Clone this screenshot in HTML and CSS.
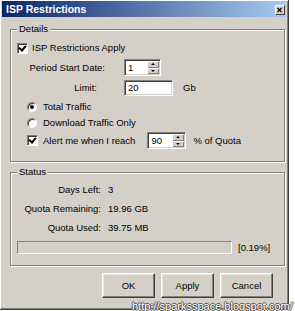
FILE: index.html
```html
<!DOCTYPE html>
<html lang="en">
<head>
    <meta charset="UTF-8">
    <title>ISP Restrictions</title>
    <link rel="stylesheet" href="styles.css">
</head>
<body>
    <div class="page">
        <div class="window">
            <div class="titlebar">
                <span class="title">ISP Restrictions</span>
                <span class="close">
                    <svg width="9" height="10" viewBox="0 0 9 10"><path d="M2.5 3 L6.5 7 M6.5 3 L2.5 7" stroke="#000" stroke-width="1.2"/></svg>
                </span>
            </div>

            <!-- Details -->
            <div class="group group-details">
                <span class="group-title">Details</span>
                <div class="row row-apply"><span class="check is-checked"></span>ISP Restrictions Apply</div>
                <div class="row row-period">
                    <span class="lbl">Period Start Date:</span>
                    <span class="spin spin-date">
                        <span class="spin-text">1</span>
                        <span class="spin-btns"><span class="spin-up"></span><span class="spin-down"></span></span>
                    </span>
                </div>
                <div class="row row-limit">
                    <span class="lbl lbl-limit">Limit:</span>
                    <span class="edit">20</span>
                    <span class="unit">Gb</span>
                </div>
                <div class="row row-radio"><span class="radio is-checked"></span>Total Traffic</div>
                <div class="row row-radio"><span class="radio"></span>Download Traffic Only</div>
                <div class="row row-alert">
                    <span class="check is-checked"></span>Alert me when I reach
                    <span class="spin spin-pct">
                        <span class="spin-text">90</span>
                        <span class="spin-btns"><span class="spin-up"></span><span class="spin-down"></span></span>
                    </span>
                    <span class="unit unit-pct">% of Quota</span>
                </div>
            </div>

            <!-- Status -->
            <div class="group group-status">
                <span class="group-title">Status</span>
                <div class="stat"><span class="stat-lbl">Days Left:</span><span class="stat-val">3</span></div>
                <div class="stat"><span class="stat-lbl">Quota Remaining:</span><span class="stat-val">19.96 GB</span></div>
                <div class="stat"><span class="stat-lbl">Quota Used:</span><span class="stat-val">39.75 MB</span></div>
                <div class="progress-row">
                    <span class="progress"></span>
                    <span class="progress-pct">[0.19%]</span>
                </div>
            </div>

            <div class="buttons">
                <button>OK</button>
                <button>Apply</button>
                <button>Cancel</button>
            </div>
        </div>
        <span class="watermark">http://sparksspace.blogspot.com/</span>
    </div>
</body>
</html>
```

FILE: styles.css
```css
body {
    margin: 0;
    background-color: #fff;
    font-family: "Liberation Sans", Arial, sans-serif;
    font-size: 9.5px;
    color: #000;
}
.page {
    position: relative;
    width: 295px;
    height: 311px;
}
.window {
    display: flex;
    flex-direction: column;
    box-sizing: border-box;
    width: 289px;
    height: 310px;
    background-color: #d4d0c8;
    border-right: 1px solid #404040;
    border-bottom: 1px solid #404040;
    box-shadow: inset 1px 1px 0 #fff, inset -1px -1px 0 #808080;
}
.titlebar {
    display: flex;
    align-items: center;
    height: 16px;
    margin: 1px 2px 0 2px;
    padding-left: 4px;
    background: linear-gradient(to right, #0a246a, #a6caf0);
}
.title {
    color: #fff;
    font-weight: bold;
    font-size: 10.5px;
    line-height: 1;
}
.close {
    display: flex;
    box-sizing: border-box;
    width: 10px;
    height: 10px;
    margin: 1px 1px 0 auto;
    background-color: #d4d0c8;
    border: 1px solid;
    border-color: #fff #404040 #404040 #fff;
}
.close svg {
    display: block;
    margin: -1px 0 0 -1px;
}

/* group boxes */
.group {
    position: relative;
    box-sizing: border-box;
    width: 275px;
    margin-left: 10px;
    border: 1px solid #808080;
    box-shadow: 1px 1px 0 #fff, inset 1px 1px 0 #fff;
}
.group-title {
    position: absolute;
    top: -7px;
    left: 6px;
    padding: 0 2px;
    line-height: 12px;
    background-color: #d4d0c8;
}
.group-details {
    height: 133px;
    margin-top: 12px;
    padding-top: 12px;
}
.group-status {
    height: 94px;
    margin-top: 10px;
    padding-top: 11px;
}
.row {
    display: flex;
    align-items: center;
    line-height: 12px;
}
.row-apply {
    height: 12px;
    padding-left: 6px;
}
.row-period {
    height: 17px;
    margin-top: 5px;
}
.row-limit {
    height: 16px;
    margin-top: 4px;
}
.row-radio {
    height: 12px;
    margin-top: 5px;
    padding-left: 16px;
}
.row-radio + .row-radio {
    margin-top: 4px;
}
.row-alert {
    height: 17px;
    margin-top: 3px;
    padding-left: 16px;
}
.lbl {
    width: 94px;
    text-align: right;
}
.lbl-limit {
    width: 86px;
    margin-right: 8px;
}

/* controls */
.check {
    box-sizing: border-box;
    width: 11px;
    height: 11px;
    margin-right: 4px;
    background-color: #fff;
    border: 1px solid;
    border-color: #808080 #fff #fff #808080;
    box-shadow: inset 1px 1px 0 #404040;
    position: relative;
}
.row-alert .check {
    margin-right: 5px;
}
.check.is-checked::after {
    content: "";
    position: absolute;
    left: 2px;
    top: 0px;
    width: 3px;
    height: 5px;
    border: solid #000;
    border-width: 0 2px 2px 0;
    transform: rotate(40deg);
}
.radio {
    position: relative;
    box-sizing: border-box;
    width: 10px;
    height: 10px;
    margin-right: 6px;
    border-radius: 50%;
    background-color: #fff;
    border: 1px solid;
    border-color: #808080 #fff #fff #808080;
    box-shadow: inset 1px 1px 0 #404040;
}
.radio.is-checked::after {
    content: "";
    position: absolute;
    left: 2px;
    top: 2px;
    width: 4px;
    height: 4px;
    border-radius: 50%;
    background-color: #000;
}
.spin,
.edit {
    display: flex;
    box-sizing: border-box;
    padding: 1px;
    background-color: #fff;
    border: 1px solid;
    border-color: #808080 #fff #fff #808080;
    box-shadow: inset 1px 1px 0 #404040, inset -1px -1px 0 #d4d0c8;
}
.spin {
    height: 17px;
}
.spin-date {
    width: 37px;
    margin-left: 19px;
}
.spin-pct {
    width: 39px;
    margin-left: 12px;
}
.spin-text {
    flex: 1;
    padding-left: 2px;
    line-height: 13px;
}
.spin-btns {
    display: flex;
    flex-direction: column;
    width: 12px;
}
.spin-up,
.spin-down {
    flex: 1;
    display: flex;
    align-items: center;
    justify-content: center;
    background-color: #d4d0c8;
    box-shadow: inset 1px 1px 0 #fff, inset -1px -1px 0 #808080;
}
.spin-up::after {
    content: "";
    border-left: 2px solid transparent;
    border-right: 2px solid transparent;
    border-bottom: 2px solid #000;
}
.spin-down::after {
    content: "";
    border-left: 2px solid transparent;
    border-right: 2px solid transparent;
    border-top: 2px solid #000;
}
.edit {
    width: 49px;
    height: 16px;
    margin-left: 19px;
    padding-left: 3px;
    line-height: 12px;
}
.unit {
    margin-left: 10px;
}
.unit-pct {
    margin-left: 7px;
}

/* status */
.stat {
    display: flex;
    height: 12px;
    line-height: 12px;
}
.stat + .stat {
    margin-top: 7px;
}
.stat-lbl {
    width: 90px;
    text-align: right;
}
.stat-val {
    margin-left: 7px;
}
.progress-row {
    display: flex;
    align-items: center;
    height: 13px;
    margin-top: 7px;
    padding-left: 6px;
}
.progress {
    box-sizing: border-box;
    width: 215px;
    height: 13px;
    border: 1px solid;
    border-color: #808080 #fff #fff #808080;
}
.progress-pct {
    margin-left: 6px;
}

.buttons {
    display: flex;
    gap: 6px;
    margin-top: 7px;
    padding-left: 102px;
}
button {
    box-sizing: border-box;
    width: 53px;
    height: 25px;
    padding: 0;
    font: inherit;
    color: #000;
    background-color: #d4d0c8;
    border: 1px solid;
    border-color: #fff #404040 #404040 #fff;
    box-shadow: inset -1px -1px 0 #808080, inset 1px 1px 0 #e8e6e0;
}
.watermark {
    position: absolute;
    left: 132px;
    top: 301px;
    font-size: 11px;
    line-height: 11px;
    color: #fff;
    text-shadow: 1px 0 0 #555, -1px 0 0 #555, 0 1px 0 #555, 0 -1px 0 #555;
}
```
